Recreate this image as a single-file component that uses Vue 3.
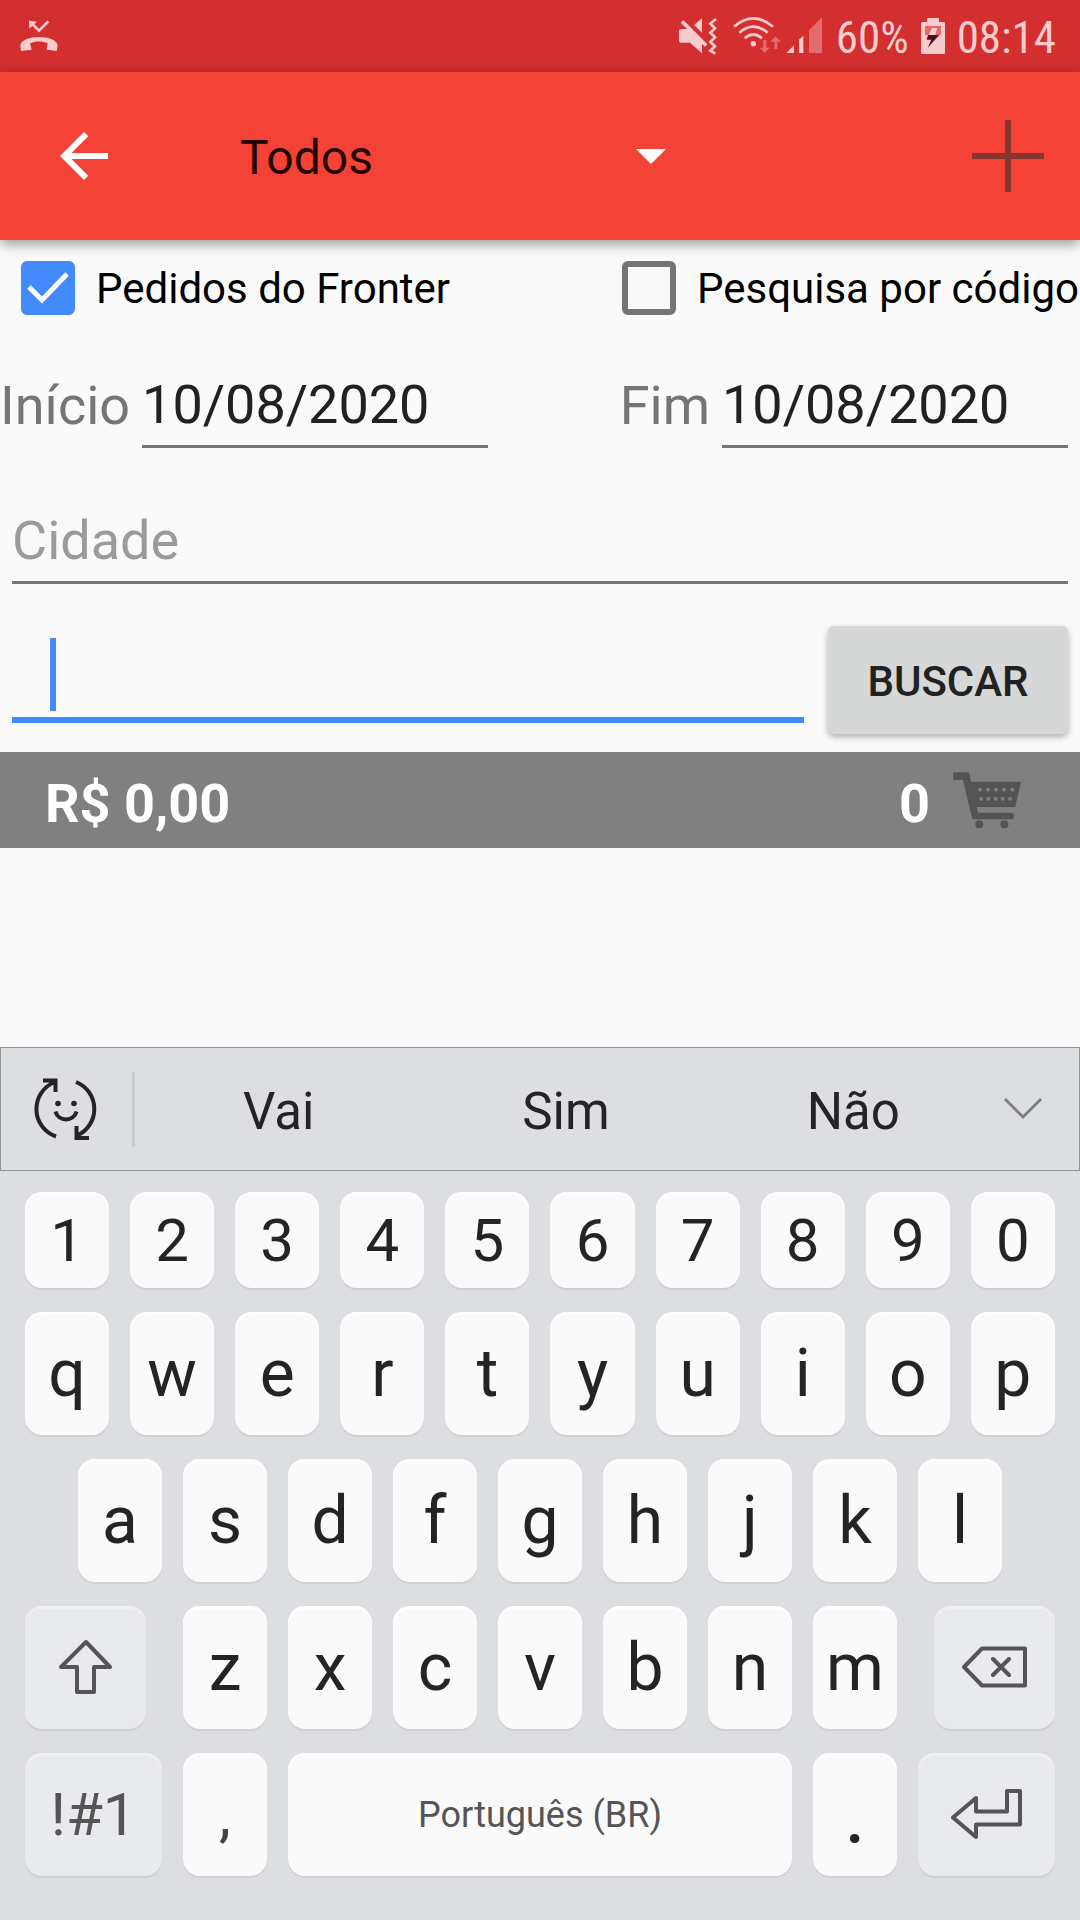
<script setup>
import { ref } from 'vue'

const filter = ref('Todos')
const fronterOrders = ref(true)
const searchByCode = ref(false)
const startDate = ref('10/08/2020')
const endDate = ref('10/08/2020')
const city = ref('')
const query = ref('')

const suggestions = ['Vai', 'Sim', 'Não']
const digits = [...'1234567890']
const topLetters = [...'qwertyuiop']
const homeLetters = [...'asdfghjkl']
const bottomLetters = [...'zxcvbnm']
const cartDots = [
  ...[600, 624, 648, 672, 697].map((x) => ({ x, y: 566 })),
  ...[603, 625, 647, 668, 690].map((x) => ({ x, y: 593 })),
]
</script>

<template>
  <div class="screen">
    <div class="status">
      <svg class="missed" width="40" height="40" viewBox="57 48 120 120" aria-hidden="true">
        <path d="M87 62L111 65L88 86Z" />
        <path d="M96 71L117 92L145 64" class="line" stroke-width="8" />
        <path d="M63 153L61 137C61 102 173 102 173 137L170 153L140 149L143 130C125 123 108 123 90 130L95 149Z" />
      </svg>
      <svg width="40" height="40" viewBox="54 48 120 120" aria-hidden="true">
        <path d="M57 93Q57 87 63 87H81L62 68L70 60L142 133L135 140L126 131V160L90 128H63Q57 128 57 122Z" />
        <path d="M102 75L126 55V98Z" />
        <path d="M168 57L151 71L165 85L151 98L165 112L151 126L165 139L151 152L166 161" class="line" stroke-width="8" />
      </svg>
      <svg class="wifi" width="50" height="40" viewBox="216 48 150 120" aria-hidden="true">
        <circle cx="280" cy="131" r="8" />
        <path d="M222 80Q280 30 339 80M238 98Q280 62 323 98M254 115Q280 92 306 115" class="line" stroke-width="8" />
        <g class="dim">
          <path d="M310 120H319V143H329L314 159L299 143H310Z" />
          <path d="M343 147H352V125H363L347 109L331 125H343Z" />
        </g>
      </svg>
      <svg class="signal" width="36" height="40" viewBox="381 48 108 120" aria-hidden="true">
        <path d="M382 159L405 136V159ZM420 159V119L433 107V159Z" />
        <path class="dim" d="M450 159V91L489 51V159Z" />
      </svg>
      <span>60%</span>
      <svg class="battery" width="24" height="40" viewBox="783 48 72 120" aria-hidden="true">
        <path d="M801 66V58Q801 54 805 54H833Q837 54 837 58V66H851Q855 66 855 70V158Q855 162 851 162H787Q783 162 783 158V70Q783 66 787 66Z" />
        <path class="dim" d="M795 78H843V105H795Z" />
        <path d="M816 84H832L826 105H806Z" />
        <path class="bolt" d="M804 105H838L803 143L814 119H800Z" />
      </svg>
      <span>08:14</span>
    </div>

    <header class="toolbar">
      <button class="icon-button" type="button" aria-label="Voltar">
        <svg width="72" height="72" viewBox="0 0 24 24" fill="#fff">
          <path d="M20 11H7.83l5.59-5.59L12 4l-8 8 8 8 1.41-1.41L7.83 13H20v-2z" />
        </svg>
      </button>
      <div class="spinner">
        <select v-model="filter" aria-label="Filtro">
          <option>Todos</option>
        </select>
        <svg width="30" height="15" viewBox="0 0 30 15" fill="#fff" aria-hidden="true"><path d="M0 0H30L15 15Z" /></svg>
      </div>
      <button class="icon-button" type="button" aria-label="Adicionar">
        <svg width="72" height="72" viewBox="0 0 72 72" stroke="#85362f" stroke-width="6"><path d="M36 0V72M0 36H72" /></svg>
      </button>
    </header>

    <main>
      <div class="checks">
        <label class="check">
          <span class="box">
            <input v-model="fronterOrders" type="checkbox">
            <svg v-if="fronterOrders" viewBox="0 0 54 54" fill="none" stroke="#fff" stroke-width="5" aria-hidden="true"><path d="M8 26L21 39L46 13" /></svg>
          </span>
          Pedidos do Fronter
        </label>
        <label class="check">
          <span class="box"><input v-model="searchByCode" type="checkbox"></span>
          Pesquisa por código
        </label>
      </div>

      <div class="dates">
        <div class="date">
          <label for="start">Início</label>
          <input id="start" v-model="startDate" class="field" type="text">
        </div>
        <div class="date">
          <label for="end">Fim</label>
          <input id="end" v-model="endDate" class="field" type="text">
        </div>
      </div>

      <div class="city">
        <input v-model="city" class="field" type="text" placeholder="Cidade" aria-label="Cidade">
      </div>

      <form class="search" @submit.prevent>
        <div class="query">
          <input v-model="query" class="field" type="text" aria-label="Pesquisa">
          <span class="caret"></span>
        </div>
        <button class="submit" type="submit">BUSCAR</button>
      </form>

      <div class="totals">
        <span>R$ 0,00</span>
        <span class="count">0</span>
        <svg width="70" height="60" viewBox="516 507 210 180" aria-hidden="true">
          <g fill="#545454">
            <path d="M520 514H567L573 542H723L706 618H590L594 635H697Q701 635 701 639V651Q701 655 697 655H577L549 537H520Z" />
            <circle cx="598" cy="670" r="12" />
            <circle cx="673" cy="670" r="12" />
          </g>
          <circle v-for="dot in cartDots" :key="`${dot.x}-${dot.y}`" :cx="dot.x" :cy="dot.y" r="6" fill="#808080" />
        </svg>
      </div>
    </main>

    <section class="keyboard" aria-label="Teclado">
      <div class="suggestions">
        <button class="emoji" type="button" aria-label="Emoji">
          <svg width="72" height="72" viewBox="0 0 72 72" fill="none" stroke="#242424" stroke-width="4">
            <path d="M26 63.5A29 29 0 0 1 25 9M13 7.500H25.500V19" />
            <path d="M46 9A29 29 0 0 1 47 62.500M46.500 53V65H59" />
            <path d="M25.500 38.500C28 49 44 49 46.500 38.500" />
            <g fill="#242424" stroke="none"><circle cx="28" cy="30.500" r="2.800" /><circle cx="44" cy="30.500" r="2.800" /></g>
          </svg>
        </button>
        <button v-for="word in suggestions" :key="word" class="word" type="button">{{ word }}</button>
        <button class="more" type="button" aria-label="Mais">
          <svg width="40" height="24" viewBox="0 0 40 24" fill="none" stroke="#7e7f82" stroke-width="3"><path d="M2 2L20 20L38 2" /></svg>
        </button>
      </div>

      <div class="keys">
        <div class="row digits">
          <button v-for="key in digits" :key="key" class="key" type="button">{{ key }}</button>
        </div>
        <div class="row">
          <button v-for="key in topLetters" :key="key" class="key" type="button">{{ key }}</button>
        </div>
        <div class="row home">
          <button v-for="key in homeLetters" :key="key" class="key" type="button">{{ key }}</button>
        </div>
        <div class="row">
          <button class="key fn shift" type="button" aria-label="Shift">
            <svg width="60" height="60" viewBox="0 0 60 60"><path d="M30 4L54 29H38V54H21V29H5Z" /></svg>
          </button>
          <button v-for="key in bottomLetters" :key="key" class="key" type="button">{{ key }}</button>
          <button class="key fn erase" type="button" aria-label="Apagar">
            <svg width="70" height="70" viewBox="0 0 70 70"><path d="M4 34L22 15.500H65V52.500H22ZM33 26L49 42M49 26L33 42" /></svg>
          </button>
        </div>
        <div class="row">
          <button class="key fn symbols" type="button">!#1</button>
          <button class="key comma" type="button">,</button>
          <button class="key space" type="button">Português (BR)</button>
          <button class="key period" type="button">.</button>
          <button class="key fn enter" type="button" aria-label="Enter">
            <svg width="72" height="72" viewBox="0 0 72 72"><path d="M2 38.500L25 19V32.500H56V12H69V45.500H25V58Z" /></svg>
          </button>
        </div>
      </div>
    </section>
  </div>
</template>

<style>
body {
  margin: 0;
  background: #fafafa;
}
</style>

<style scoped>
.screen {
  display: flex;
  flex-direction: column;
  min-height: 100vh;
  overflow-x: hidden;
  background: #fafafa;
  color: #212121;
  font-family: Roboto, "Noto Sans", sans-serif;
}

button,
input,
select {
  margin: 0;
  padding: 0;
  border: 0;
  border-radius: 0;
  background: none;
  color: inherit;
  font: inherit;
  outline: 0;
  appearance: none;
}

svg {
  display: block;
  flex: none;
}

.status {
  display: flex;
  align-items: center;
  height: 72px;
  padding: 0 24px 0 19px;
  background: #d32f2f;
  color: #f8cccc;
  font-family: "Roboto Condensed", Roboto, sans-serif;
  font-size: 45px;
  fill: #f8cccc;
}

.status span {
  padding-top: 2px;
}

.missed {
  margin-right: auto;
}

.line {
  fill: none;
  stroke: #f8cccc;
}

.dim {
  fill: #e26c6c;
}

.bolt {
  fill: #4a1018;
}

.wifi {
  margin: 0 4px 0 14px;
}

.signal {
  margin-right: 14px;
}

.battery {
  margin: 0 12px;
}

.toolbar {
  position: relative;
  display: flex;
  align-items: center;
  height: 168px;
  padding: 0 36px 0 48px;
  background: #f44336;
  box-shadow: 0 4px 12px rgba(0, 0, 0, 0.4);
}

.spinner {
  display: flex;
  align-items: center;
  width: 426px;
  margin: 0 auto 0 120px;
  color: #230300;
  font-size: 48px;
}

.spinner select {
  flex: 1;
  height: 72px;
  padding-top: 2px;
}

.checks {
  display: grid;
  grid-template-columns: 601fr 479fr;
  padding-top: 21px;
  color: #000;
  font-size: 42px;
  line-height: 56px;
  white-space: nowrap;
}

.check {
  display: flex;
  gap: 21px;
  min-width: 0;
  padding-left: 21px;
}

.box {
  display: grid;
  width: 54px;
  height: 54px;
}

.box > * {
  grid-area: 1 / 1;
}

.box input {
  box-sizing: border-box;
  width: 54px;
  height: 54px;
  border: 6px solid #757575;
  border-radius: 6px;
}

.box input:checked {
  border-color: #448aff;
  background: #448aff;
}

.box svg {
  pointer-events: none;
}

.field {
  box-sizing: border-box;
  width: 100%;
  height: 84px;
  border-bottom: 3px solid #757575;
  font-size: 54px;
  line-height: 64px;
}

.field::placeholder {
  color: #9b9b9b;
  opacity: 1;
}

.dates {
  display: flex;
  justify-content: space-between;
  padding: 47px 12px 0 0;
}

.date {
  display: flex;
  gap: 12px;
}

.date label {
  color: #757575;
  font-size: 54px;
  line-height: 84px;
}

.date .field {
  width: 346px;
}

.city {
  padding: 52px 12px 0;
}

.search {
  display: flex;
  gap: 24px;
  padding: 42px 12px 18px;
}

.query {
  position: relative;
  flex: 1;
}

.query .field {
  height: 97px;
  padding-left: 38px;
  border-bottom: 6px solid #448aff;
}

.caret {
  position: absolute;
  top: 12px;
  left: 38px;
  width: 6px;
  height: 73px;
  background: #448aff;
}

.submit {
  width: 240px;
  height: 108px;
  padding-top: 2px;
  border-radius: 6px;
  background: #d6d7d7;
  box-shadow: 0 3px 6px rgba(0, 0, 0, 0.3);
  font-size: 42px;
  font-weight: 500;
}

.totals {
  display: flex;
  align-items: center;
  height: 96px;
  padding: 0 58px 0 45px;
  background: #808080;
  color: #fff;
  font-size: 54px;
  font-weight: 700;
}

.totals span {
  padding-top: 6px;
}

.totals .count {
  margin: 0 22px 0 auto;
}

.keyboard {
  margin-top: auto;
  background: #dddee2;
  color: #242424;
}

.suggestions {
  display: flex;
  align-items: center;
  height: 122px;
  border: 1px solid #929395;
  font-size: 51px;
}

.emoji {
  display: flex;
  align-items: center;
  width: 134px;
  height: 75px;
  padding-left: 29px;
  box-sizing: border-box;
  border-right: 3px solid #c9cacc;
}

.word {
  flex: 1;
  padding-top: 4px;
}

.more {
  padding: 0 36px 0 6px;
}

.keys {
  display: flex;
  flex-direction: column;
  gap: 24px;
  padding: 21px 25px 44px;
}

.row {
  display: flex;
  gap: 21px;
  height: 123px;
  font-size: 66px;
}

.digits {
  height: 96px;
  font-size: 60px;
}

.home {
  padding: 0 53px;
}

.key {
  display: flex;
  flex: 84 1 0;
  align-items: center;
  justify-content: center;
  min-width: 0;
  border-radius: 17px;
  background: #fafafa;
  box-shadow: 0 2px 1px #cfd0d4, inset 0 3px 1px #fff;
  white-space: nowrap;
}

.fn {
  background: #e9eaee;
  box-shadow: 0 2px 1px #cfd0d4, inset 0 3px 1px #f0f1f4;
  color: #555;
}

.fn svg {
  fill: none;
  stroke: #555;
  stroke-width: 4;
  stroke-linejoin: round;
  stroke-linecap: round;
}

.shift,
.erase {
  flex-grow: 121;
}

.shift {
  margin-right: 16px;
}

.erase {
  margin-left: 16px;
}

.symbols,
.enter {
  flex-grow: 137;
}

.symbols {
  font-size: 60px;
}

.comma {
  color: #444;
  font-size: 60px;
}

.space {
  flex-grow: 504;
  color: #555;
  font-size: 36px;
}

.period {
  font-size: 84px;
}
</style>
